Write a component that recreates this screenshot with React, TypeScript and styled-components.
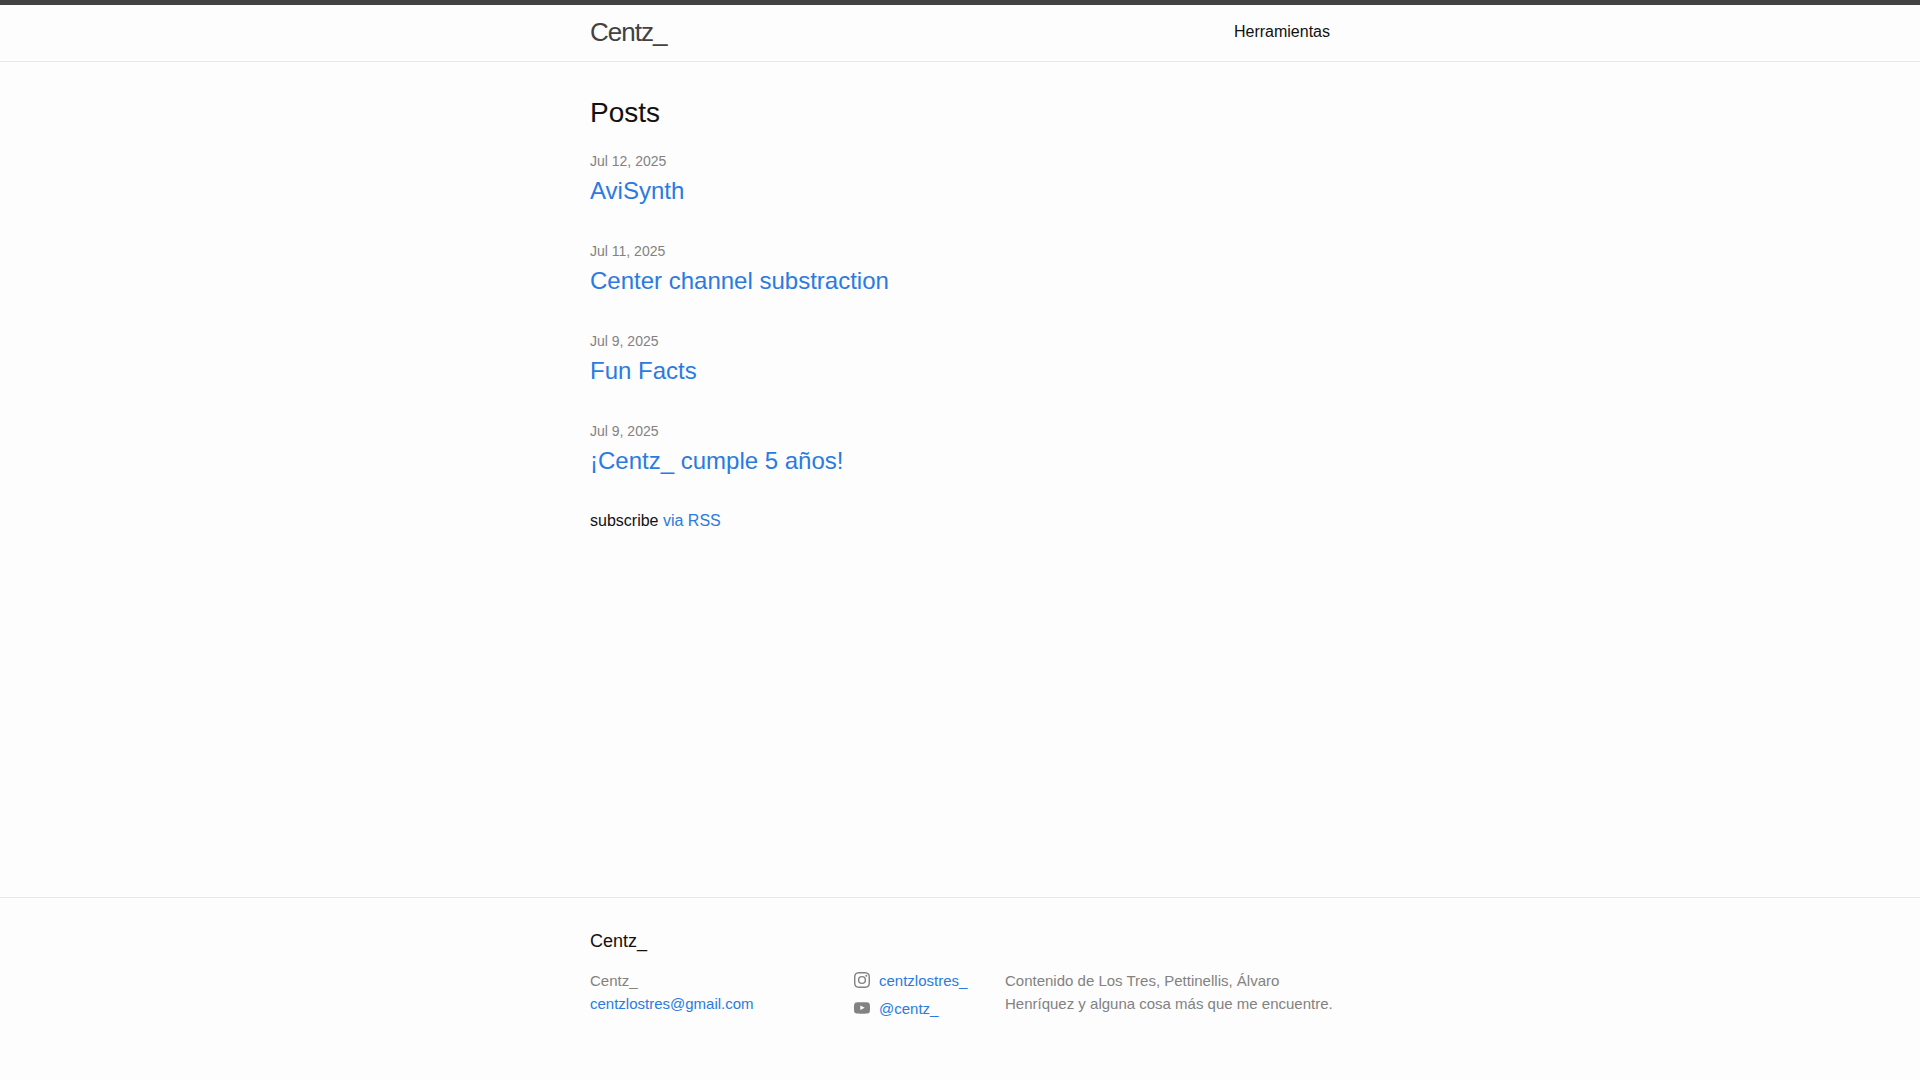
import React from 'react';
import styled, { createGlobalStyle } from 'styled-components';

const GlobalStyle = createGlobalStyle`
  * { margin: 0; padding: 0; box-sizing: border-box; }
  body {
    font: 400 16px/24px "Liberation Sans", Arial, sans-serif;
    color: #111;
    background: #fdfdfd;
  }
`;

const Page = styled.div`
  display: flex;
  flex-direction: column;
  min-height: 100vh;
`;

const Wrapper = styled.div`
  width: 100%;
  max-width: 800px;
  margin: 0 auto;
  padding: 0 30px;
`;

const Link = styled.a`
  color: #2a7ae2;
  text-decoration: none;
  &:hover { color: #111; text-decoration: underline; }
`;

const Header = styled.header`
  border-top: 5px solid #424242;
  border-bottom: 1px solid #e8e8e8;
`;

const HeaderRow = styled(Wrapper)`
  display: flex;
  justify-content: space-between;
  line-height: 54px;
  min-height: 56px;
`;

const SiteTitle = styled.a`
  font-size: 26px;
  font-weight: 300;
  letter-spacing: -1px;
  color: #424242;
  text-decoration: none;
`;

const NavLink = styled.a`
  color: #111;
  text-decoration: none;
`;

const Main = styled.main`
  flex: 1 0 auto;
  padding: 30px 0;
`;

const ListHeading = styled.h2`
  font-size: 28px;
  font-weight: 400;
  line-height: 42px;
  margin-bottom: 15px;
`;

const PostList = styled.ul`
  list-style: none;
`;

const PostItem = styled.li`
  margin-bottom: 30px;
`;

const PostDate = styled.time`
  display: block;
  font-size: 14px;
  line-height: 24px;
  color: #828282;
`;

const PostTitle = styled.h3`
  font-size: 24px;
  font-weight: 400;
  line-height: 36px;
`;

const Footer = styled.footer`
  border-top: 1px solid #e8e8e8;
  padding: 30px 0 55px;
`;

const FooterHeading = styled.h2`
  font-size: 18px;
  font-weight: 400;
  line-height: 27px;
  margin-bottom: 14px;
`;

const FooterColumns = styled.div`
  display: grid;
  grid-template-columns: 264px 151px 1fr;
  margin-right: -15px;
  font-size: 15px;
  line-height: 23px;
  color: #828282;

  @media (max-width: 800px) {
    grid-template-columns: 1fr;
    margin-right: 0;
    row-gap: 15px;
  }
`;

const PlainList = styled.ul`
  list-style: none;
`;

const SocialItem = styled.li`
  padding-bottom: 5px;
`;

const SocialLink = styled(Link)`
  display: flex;
  gap: 9px;
`;

const Icon = styled.svg`
  width: 16px;
  height: 16px;
  margin-top: 3px;
  fill: #828282;
`;

const posts = [
  { date: 'Jul 12, 2025', title: 'AviSynth' },
  { date: 'Jul 11, 2025', title: 'Center channel substraction' },
  { date: 'Jul 9, 2025', title: 'Fun Facts' },
  { date: 'Jul 9, 2025', title: '¡Centz_ cumple 5 años!' },
];

const INSTAGRAM =
  'M8 0C5.827 0 5.555.01 4.702.048 3.85.087 3.269.222 2.76.42a3.908 3.908 0 0 0-1.417.923c-.445.444-.72.89-.923 1.417-.198.509-.333 1.09-.372 1.942C.01 5.555 0 5.827 0 8s.01 2.445.048 3.298c.039.852.174 1.433.372 1.942.204.526.478.973.923 1.417.444.445.89.72 1.417.923.509.198 1.09.333 1.942.372C5.555 15.99 5.827 16 8 16s2.445-.01 3.298-.048c.852-.039 1.433-.174 1.942-.372a3.908 3.908 0 0 0 1.417-.923c.445-.444.72-.89.923-1.417.198-.509.333-1.09.372-1.942C15.99 10.445 16 10.173 16 8s-.01-2.445-.048-3.298c-.039-.852-.174-1.433-.372-1.942a3.908 3.908 0 0 0-.923-1.417A3.908 3.908 0 0 0 13.24.42c-.509-.198-1.09-.333-1.942-.372C10.445.01 10.173 0 8 0zm0 1.441c2.136 0 2.389.009 3.233.047.78.036 1.203.166 1.485.276.374.145.64.318.92.598.28.28.453.546.598.92.11.282.24.705.276 1.485.038.844.047 1.097.047 3.233s-.009 2.389-.047 3.233c-.036.78-.166 1.203-.276 1.485a2.48 2.48 0 0 1-.598.92c-.28.28-.546.453-.92.598-.282.11-.705.24-1.485.276-.844.038-1.097.047-3.233.047s-2.389-.009-3.233-.047c-.78-.036-1.203-.166-1.485-.276a2.48 2.48 0 0 1-.92-.598 2.48 2.48 0 0 1-.598-.92c-.11-.282-.24-.705-.276-1.485C1.45 10.389 1.441 10.136 1.441 8s.009-2.389.047-3.233c.036-.78.166-1.203.276-1.485.145-.374.318-.64.598-.92.28-.28.546-.453.92-.598.282-.11.705-.24 1.485-.276C5.611 1.45 5.864 1.441 8 1.441zM8 3.892a4.108 4.108 0 1 0 0 8.216 4.108 4.108 0 0 0 0-8.216zm0 6.775a2.667 2.667 0 1 1 0-5.334 2.667 2.667 0 0 1 0 5.334zM13.23 3.73a.96.96 0 1 1-1.92 0 .96.96 0 0 1 1.92 0z';

const YOUTUBE =
  'M0 7.345c0-1.294.16-2.59.16-2.59s.156-1.1.636-1.587c.608-.637 1.408-.617 1.764-.684C3.84 2.36 8 2.324 8 2.324s3.362.004 5.6.166c.314.038.996.04 1.604.678.48.486.636 1.588.636 1.588S16 6.05 16 7.346v1.258c0 1.296-.16 2.59-.16 2.59s-.156 1.102-.636 1.588c-.608.638-1.29.64-1.604.678-2.238.162-5.6.166-5.6.166s-4.16-.037-5.44-.16c-.356-.067-1.156-.047-1.764-.684-.48-.487-.636-1.587-.636-1.587S0 9.9 0 8.605v-1.26zm6.348 2.73V5.58l4.323 2.255-4.32 2.24h-.002z';

const socials = [
  { name: 'centzlostres_', path: INSTAGRAM },
  { name: '@centz_', path: YOUTUBE },
];

export default function App() {
  return (
    <Page>
      <GlobalStyle />
      <Header>
        <HeaderRow>
          <SiteTitle href="#">Centz_</SiteTitle>
          <nav>
            <NavLink href="#herramientas">Herramientas</NavLink>
          </nav>
        </HeaderRow>
      </Header>
      <Main>
        <Wrapper>
          <ListHeading>Posts</ListHeading>
          <PostList>
            {posts.map((post) => (
              <PostItem key={post.title}>
                <PostDate>{post.date}</PostDate>
                <PostTitle>
                  <Link href="#post">{post.title}</Link>
                </PostTitle>
              </PostItem>
            ))}
          </PostList>
          <p>
            subscribe <Link href="#rss">via RSS</Link>
          </p>
        </Wrapper>
      </Main>
      <Footer>
        <Wrapper>
          <FooterHeading>Centz_</FooterHeading>
          <FooterColumns>
            <PlainList>
              <li>Centz_</li>
              <li>
                <Link href="mailto:centzlostres@gmail.com">centzlostres@gmail.com</Link>
              </li>
            </PlainList>
            <PlainList>
              {socials.map((social) => (
                <SocialItem key={social.name}>
                  <SocialLink href="#social">
                    <Icon viewBox="0 0 16 16" fillRule="evenodd" aria-hidden="true">
                      <path d={social.path} />
                    </Icon>
                    {social.name}
                  </SocialLink>
                </SocialItem>
              ))}
            </PlainList>
            <p>Contenido de Los Tres, Pettinellis, Álvaro Henríquez y alguna cosa más que me encuentre.</p>
          </FooterColumns>
        </Wrapper>
      </Footer>
    </Page>
  );
}
